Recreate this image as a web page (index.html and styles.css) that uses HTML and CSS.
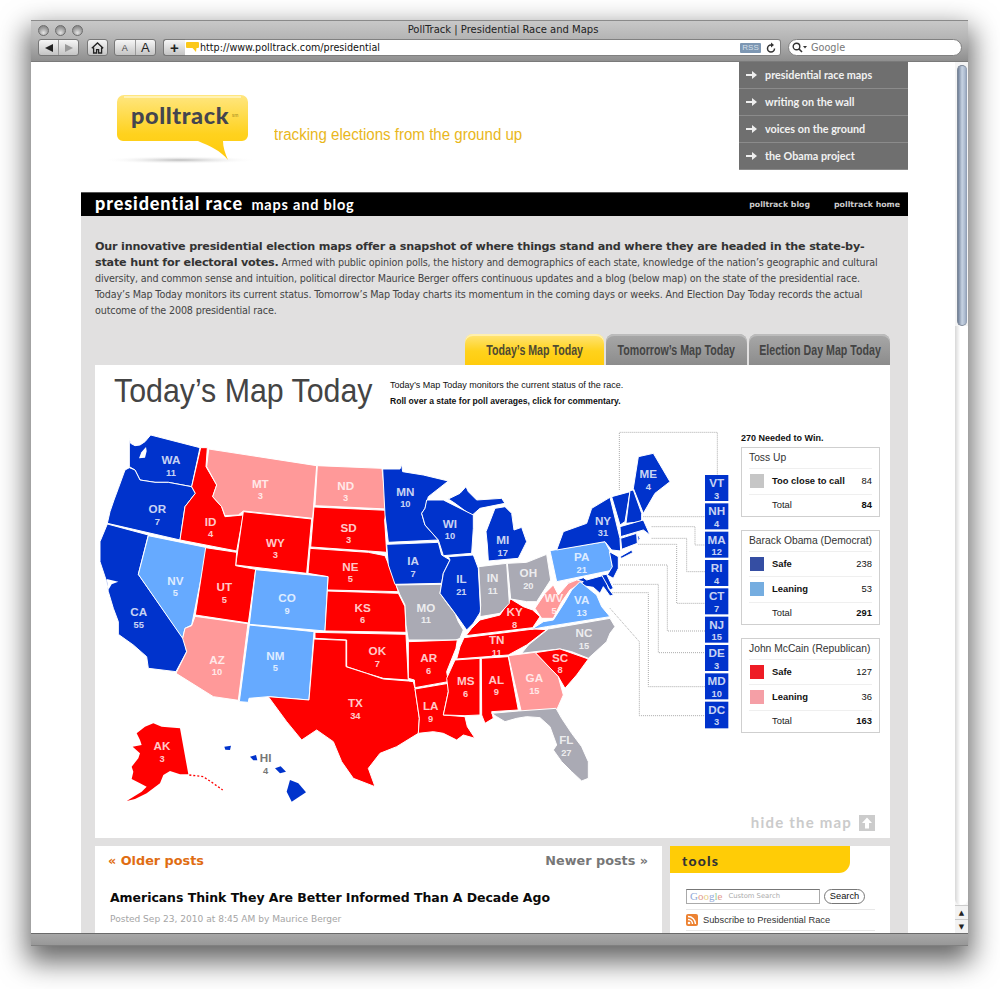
FILE: index.html
```html
<!DOCTYPE html>
<html lang="en">
<head>
<meta charset="utf-8">
<title>PollTrack | Presidential Race and Maps</title>
<link rel="stylesheet" href="styles.css">
</head>
<body>
<div class="window">
  <header class="chrome">
    <div class="titlebar">
      <div class="lights"><i></i><i></i><i></i></div>
      <div class="wintitle">PollTrack | Presidential Race and Maps</div>
      <div></div>
    </div>
    <div class="toolbar">
      <div class="seg seg-nav">
        <span class="btn"><svg width="10" height="10" viewBox="0 0 10 10"><path d="M9 1v8L1 5z" fill="#222"/></svg></span>
        <span class="btn"><svg width="10" height="10" viewBox="0 0 10 10"><path d="M1 1v8l8-4z" fill="#999"/></svg></span>
      </div>
      <div class="seg seg-home">
        <span class="btn"><svg width="13" height="12" viewBox="0 0 13 12"><path d="M.8 6.2 6.5 1l5.7 5.2M2.6 5.4V11h3V7.6h2V11h3V5.4" fill="none" stroke="#222" stroke-width="1.3"/></svg></span>
      </div>
      <div class="seg seg-font">
        <span class="btn a-sm">A</span>
        <span class="btn a-lg">A</span>
      </div>
      <div class="addr">
        <span class="btn plus">+</span>
        <div class="urlfield">
          <svg class="fav" width="13" height="11" viewBox="0 0 13 11"><path d="M1 0h11a1 1 0 0 1 1 1v4a1 1 0 0 1-1 1H10.500L10 10 6.500 6H1a1 1 0 0 1-1-1V1a1 1 0 0 1 1-1z" fill="#fbc81a"/></svg>
          <span class="url">http://www.polltrack.com/presidential</span>
          <span class="rss-badge">RSS</span>
          <svg class="reload" width="10" height="11" viewBox="0 0 10 11"><path d="M8.500 6.500A3.500 3.500 0 1 1 5 3" fill="none" stroke="#333" stroke-width="1.500"/><path d="M5 .5v5L8 3z" fill="#333"/></svg>
        </div>
      </div>
      <div class="searchfield">
        <svg width="16" height="11" viewBox="0 0 16 11"><circle cx="4.500" cy="4.500" r="3.300" fill="none" stroke="#333" stroke-width="1.400"/><path d="m7 7 3 3" stroke="#333" stroke-width="1.600"/><path d="M11 4h4l-2 2.500z" fill="#333"/></svg>
        <span>Google</span>
      </div>
    </div>
  </header>

  <div class="main">
    <div class="viewport">
      <div class="site">
        <div class="head">
          <svg class="logo" width="160" height="80" viewBox="0 0 160 80" role="img" aria-label="polltrack">
            <defs>
              <linearGradient id="lg" x1="0" y1="0" x2="0" y2="1"><stop offset="0" stop-color="#ffe680"/><stop offset=".6" stop-color="#ffd21e"/><stop offset="1" stop-color="#ffc90a"/></linearGradient>
              <radialGradient id="ls"><stop offset="0" stop-color="#bbb"/><stop offset="1" stop-color="#fff" stop-opacity="0"/></radialGradient>
            </defs>
            <ellipse cx="75" cy="69" rx="78" ry="4" fill="url(#ls)"/>
            <path d="M19 4h117a7 7 0 0 1 7 7v33a6 6 0 0 1-6 6h-19c0 6 2 12 5 19-7-9-18-14-30-19H18a6 6 0 0 1-6-6V11a7 7 0 0 1 7-7z" fill="url(#lg)"/>
            <path d="M19 6h117" stroke="#fff6c8" stroke-width="1.500" fill="none"/>
            <text class="logo-word" x="26" y="33">polltrack</text>
            <text class="logo-sm" x="127" y="26">sm</text>
          </svg>
          <div class="tagline"><span>tracking elections from the ground up</span></div>
          <nav class="sitenav">
            <a class="navrow"><svg width="11" height="8" viewBox="0 0 11 8"><path d="M0 3h6V0l5 4-5 4V5H0z" fill="#eee"/></svg>presidential race maps</a>
            <a class="navrow"><svg width="11" height="8" viewBox="0 0 11 8"><path d="M0 3h6V0l5 4-5 4V5H0z" fill="#eee"/></svg>writing on the wall</a>
            <a class="navrow"><svg width="11" height="8" viewBox="0 0 11 8"><path d="M0 3h6V0l5 4-5 4V5H0z" fill="#eee"/></svg>voices on the ground</a>
            <a class="navrow"><svg width="11" height="8" viewBox="0 0 11 8"><path d="M0 3h6V0l5 4-5 4V5H0z" fill="#eee"/></svg>the Obama project</a>
          </nav>
        </div>

        <div class="blackbar">
          <h1><b>presidential race</b> <span>maps and blog</span></h1>
          <div class="barlinks"><a>polltrack blog</a><a>polltrack home</a></div>
        </div>

        <div class="panel">
          <p class="intro"><strong>Our innovative presidential election maps offer a snapshot of where things stand and where they are headed in the state-by-<br>state hunt for electoral votes.</strong> Armed with public opinion polls, the history and demographics of each state, knowledge of the nation’s geographic and cultural<br>diversity, and common sense and intuition, political director Maurice Berger offers continuous updates and a blog (below map) on the state of the presidential race.<br>Today’s Map Today monitors its current status. Tomorrow’s Map Today charts its momentum in the coming days or weeks. And Election Day Today records the actual<br>outcome of the 2008 presidential race.</p>

          <div class="tabs">
            <div class="tab tab-on"><span>Today’s Map Today</span></div>
            <div class="tab tab-off"><span>Tomorrow’s Map Today</span></div>
            <div class="tab tab-off"><span>Election Day Map Today</span></div>
          </div>

          <section class="mapcard">
            <div class="maphead">
              <h2><span>Today’s Map Today</span></h2>
              <div class="mapdesc">
                <p>Today’s Map Today monitors the current status of the race.</p>
                <p><b>Roll over a state for poll averages, click for commentary.</b></p>
              </div>
            </div>
            <div class="mapbody">
              <svg class="usmap" width="640" height="385" viewBox="95 425 640 385" role="img" aria-label="Electoral map of the United States">
                <g class="leaders" transform="translate(380 425) scale(.33333)">
                  <path d="M718 195V22H1012V150"/>
                  <path d="M790 275H975"/>
                  <path d="M815 305H945V360H975"/>
                  <path d="M815 340H920V440H975"/>
                  <path d="M775 358H890V535H975"/>
                  <path d="M720 420H862V618H975"/>
                  <path d="M700 478H835V683H975"/>
                  <path d="M695 503H805V785H975"/>
                  <path d="M690 550 778 650V872H975"/>
                </g>
                <g class="states" transform="translate(90 425) scale(.33333)">
                  <path class="b" d="M118 40 122 55 135 62 150 60 165 50 182 30 330 68 305 185 235 172 195 172 150 165 135 135 118 125Z"/>
                  <path class="water" d="M168 66 154 82 147 100 165 98 170 78Z"/>
                  <path class="b" d="M118 128 135 135 150 165 195 172 235 172 305 185 316 205 285 245 270 345 52 295 60 260 72 225 85 190 105 135Z"/>
                  <path class="b" d="M52 297 175 330 145 448 283 645 290 680 258 740 175 730 170 695 130 660 85 628 85 590 70 550 55 500 50 470 30 410 30 350Z"/>
                  <path class="water" d="M50 462 85 470 65 478 55 495Z"/>
                  <path class="lb" d="M175 332 352 368 305 600 285 610 278 640 145 448Z"/>
                  <path class="r" d="M332 68 352 68 348 125 380 180 368 215 395 245 405 275 460 270 440 378 270 345 285 245 316 205 305 185Z"/>
                  <path class="lr" d="M356 72 680 122 668 280 460 258 445 270 405 272 395 245 368 215 380 180 350 125Z"/>
                  <path class="lr" d="M682 122 876 130 890 252 675 242Z"/>
                  <path class="r" d="M672 246 890 256 884 285 890 382 835 378 662 366Z"/>
                  <path class="r" d="M460 260 665 282 650 445 437 420Z"/>
                  <path class="r" d="M660 370 835 382 885 392 905 440 925 500 712 495 714 455 654 445Z"/>
                  <path class="r" d="M347 368 440 382 437 422 497 433 475 594 316 570Z"/>
                  <path class="lb" d="M497 434 714 455 705 618 478 598Z"/>
                  <path class="lb" d="M478 600 672 620 657 825 535 815 477 820 475 832 448 830Z"/>
                  <path class="lr" d="M315 574 474 596 445 826 370 815 258 745 290 680 278 640 285 610 305 602Z"/>
                  <path class="r" d="M712 498 925 505 945 545 948 622 705 618Z"/>
                  <path class="r" d="M675 622 948 628 955 765 880 760 830 745 770 725 770 645 675 640Z"/>
                  <path class="r" d="M672 642 768 646 768 725 830 745 880 762 955 768 970 770 975 790 988 880 985 925 920 965 870 985 835 1030 855 1085 790 1060 755 1010 730 950 680 915 635 945 590 890 535 815 657 825Z"/>
                  <path class="r nostroke" d="M140 925 165 905 190 895 215 905 270 910 295 1048 270 1048 240 1038 220 1050 210 1075 170 1105 135 1122 110 1128 155 1100 170 1085 150 1075 125 1062 130 1040 125 1025 145 1000 150 985 128 965 155 960 150 945Z"/>
                  <path class="dash" d="M298 1050 340 1055 370 1075 398 1095"/>
                  <path class="b nostroke" d="M403 965 423 962 420 975 406 974Z"/>
                  <path class="b nostroke" d="M480 995 498 990 502 1006 490 1006Z"/>
                  <path class="b nostroke" d="M555 1030 572 1024 588 1040 570 1045Z"/>
                  <path class="b nostroke" d="M600 1065 625 1075 648 1102 605 1130 590 1100Z"/>
                  <text class="s" x="243" y="118">WA</text><text class="n" x="243" y="154">11</text>
                  <text class="s" x="202" y="263">OR</text><text class="n" x="202" y="299">7</text>
                  <text class="s" x="146" y="574">CA</text><text class="n" x="146" y="609">55</text>
                  <text class="s" x="256" y="479">NV</text><text class="n" x="256" y="514">5</text>
                  <text class="s" x="362" y="302">ID</text><text class="n" x="362" y="337">4</text>
                  <text class="s" x="511" y="189">MT</text><text class="n" x="511" y="223">3</text>
                  <text class="s" x="767" y="194">ND</text><text class="n" x="767" y="229">3</text>
                  <text class="s" x="776" y="320">SD</text><text class="n" x="776" y="355">3</text>
                  <text class="s" x="556" y="365">WY</text><text class="n" x="556" y="400">3</text>
                  <text class="s" x="781" y="437">NE</text><text class="n" x="781" y="471">5</text>
                  <text class="s" x="403" y="498">UT</text><text class="n" x="403" y="533">5</text>
                  <text class="s" x="591" y="531">CO</text><text class="n" x="591" y="566">9</text>
                  <text class="s" x="818" y="560">KS</text><text class="n" x="818" y="595">6</text>
                  <text class="s" x="862" y="690">OK</text><text class="n" x="862" y="725">7</text>
                  <text class="s" x="556" y="704">NM</text><text class="n" x="556" y="739">5</text>
                  <text class="s" x="381" y="716">AZ</text><text class="n" x="381" y="751">10</text>
                  <text class="s" x="796" y="846">TX</text><text class="n" x="796" y="881">34</text>
                  <text class="s" x="216" y="976">AK</text><text class="n" x="216" y="1011">3</text>
                  <text class="s hi" x="527" y="1011">HI</text><text class="n hi" x="527" y="1046">4</text>
                </g>
                <g class="states" transform="translate(380 425) scale(.33333)">
                  <path class="b" d="M8 132 60 132 65 118 68 140 130 150 205 168 145 215 135 250 125 265 135 300 175 345 25 352 15 270Z"/>
                  <path class="b" d="M20 358 175 352 185 390 210 405 190 445 185 475 45 478 25 420Z"/>
                  <path class="g" d="M48 480 185 478 180 505 205 540 225 565 235 590 250 615 240 640 228 645 85 645 78 600 75 540 60 510Z"/>
                  <path class="r" d="M85 650 232 645 228 670 200 740 205 770 105 788 103 765 85 760Z"/>
                  <path class="r" d="M105 792 205 775 205 800 190 870 255 875 262 905 285 940 250 930 230 945 190 925 160 920 115 925 118 880Z"/>
                  <path class="r" d="M225 705 300 700 300 870 255 872 190 870 205 800 200 760Z"/>
                  <path class="r" d="M304 700 385 695 415 855 335 860 340 880 315 895 305 870Z"/>
                  <path class="r" d="M252 638 462 612 500 614 440 660 385 690 230 702 240 665Z"/>
                  <path class="r" d="M258 632 275 610 300 585 360 570 392 522 430 545 458 555 480 575 458 608Z"/>
                  <path class="b" d="M205 395 280 390 295 430 302 560 280 595 260 615 225 565 180 505 190 445 210 405Z"/>
                  <path class="g" d="M296 425 380 415 388 535 360 565 300 575 302 540Z"/>
                  <path class="g" d="M382 415 440 412 500 388 512 465 470 530 440 530 392 522Z"/>
                  <path class="b" d="M325 408 322 360 318 320 345 250 375 245 395 265 402 315 425 307 440 350 415 400Z"/>
                  <path class="b" d="M205 222 240 205 258 185 265 200 290 225 365 220 375 235 300 250 275 272 225 235Z"/>
                  <path class="b" d="M140 225 190 225 280 270 280 310 275 385 190 392 175 345 135 300 125 265 135 250Z"/>
                  <path class="b" d="M560 475 610 458 620 465 675 450 685 490 700 510 690 513 670 485 660 505 640 487Z"/>
                  <path class="b" d="M665 450 680 448 700 490 690 495Z"/>
                  <path class="lb" d="M510 377 675 350 690 378 695 415 700 435 530 470Z"/>
                  <path class="lr" d="M465 550 495 505 520 480 535 510 565 475 590 465 610 470 570 495 545 530 520 580 485 580Z"/>
                  <path class="lb" d="M455 613 490 590 520 585 555 530 575 495 600 470 625 490 650 510 665 545 690 575 500 605Z"/>
                  <path class="g" d="M425 685 445 660 505 612 690 580 705 605 690 625 680 650 625 700 575 680 540 672 465 680Z"/>
                  <path class="r" d="M465 683 540 672 625 702 590 750 555 790 535 755Z"/>
                  <path class="lr" d="M385 692 465 682 535 755 550 810 530 855 425 865Z"/>
                  <path class="g" d="M335 865 415 858 528 850 545 880 575 925 605 965 625 1010 625 1060 605 1068 575 1040 545 1010 520 975 530 960 510 905 480 878 440 875 410 880 375 890 350 875Z"/>
                  <path class="b" d="M530 375 550 320 620 295 635 250 690 217 720 340 722 378 695 375 675 350Z"/>
                  <path class="b" d="M720 395 755 375 758 383 725 400Z"/>
                  <path class="b" d="M688 380 715 395 715 430 700 460 682 450 697 425Z"/>
                  <path class="b" d="M695 215 750 200 735 290 720 300Z"/>
                  <path class="b" d="M750 197 760 195 785 265 785 290 738 295Z"/>
                  <path class="b" d="M760 190 775 95 820 85 870 170 825 205 790 265Z"/>
                  <path class="b" d="M720 305 790 285 810 330 790 315 722 335Z"/>
                  <path class="b" d="M722 340 770 325 772 355 725 373Z"/>
                  <path class="b" d="M772 325 780 340 775 350Z"/>
                  <text class="s" x="76" y="212">MN</text><text class="n" x="76" y="247">10</text>
                  <text class="s" x="210" y="308">WI</text><text class="n" x="210" y="343">10</text>
                  <text class="s" x="368" y="358">MI</text><text class="n" x="368" y="393">17</text>
                  <text class="s" x="99" y="420">IA</text><text class="n" x="99" y="455">7</text>
                  <text class="s" x="244" y="474">IL</text><text class="n" x="244" y="509">21</text>
                  <text class="s" x="338" y="472">IN</text><text class="n" x="338" y="507">11</text>
                  <text class="s" x="445" y="457">OH</text><text class="n" x="445" y="492">20</text>
                  <text class="s" x="138" y="560">MO</text><text class="n" x="138" y="595">11</text>
                  <text class="s" x="404" y="574">KY</text><text class="n" x="404" y="609">8</text>
                  <text class="s" x="522" y="530">WV</text><text class="n" x="522" y="567">5</text>
                  <text class="s" x="605" y="538">VA</text><text class="n" x="605" y="573">13</text>
                  <text class="s" x="605" y="408">PA</text><text class="n" x="605" y="443">21</text>
                  <text class="s" x="669" y="299">NY</text><text class="n" x="669" y="334">31</text>
                  <text class="s" x="805" y="160">ME</text><text class="n" x="805" y="195">4</text>
                  <text class="s" x="350" y="657">TN</text><text class="n" x="350" y="692">11</text>
                  <text class="s" x="146" y="711">AR</text><text class="n" x="146" y="746">6</text>
                  <text class="s" x="612" y="636">NC</text><text class="n" x="612" y="671">15</text>
                  <text class="s" x="540" y="710">SC</text><text class="n" x="540" y="745">8</text>
                  <text class="s" x="257" y="780">MS</text><text class="n" x="257" y="815">6</text>
                  <text class="s" x="349" y="776">AL</text><text class="n" x="349" y="811">9</text>
                  <text class="s" x="463" y="771">GA</text><text class="n" x="463" y="806">15</text>
                  <text class="s" x="152" y="855">LA</text><text class="n" x="152" y="890">9</text>
                  <text class="s" x="559" y="957">FL</text><text class="n" x="559" y="992">27</text>
                  <rect class="bx" x="975" y="150" width="70" height="78"/><text class="s" x="1010" y="186">VT</text><text class="n" x="1010" y="221">3</text>
                  <rect class="bx" x="975" y="235" width="70" height="78"/><text class="s" x="1010" y="271">NH</text><text class="n" x="1010" y="306">4</text>
                  <rect class="bx" x="975" y="320" width="70" height="78"/><text class="s" x="1010" y="356">MA</text><text class="n" x="1010" y="391">12</text>
                  <rect class="bx" x="975" y="405" width="70" height="78"/><text class="s" x="1010" y="441">RI</text><text class="n" x="1010" y="476">4</text>
                  <rect class="bx" x="975" y="490" width="70" height="78"/><text class="s" x="1010" y="526">CT</text><text class="n" x="1010" y="561">7</text>
                  <rect class="bx" x="975" y="575" width="70" height="78"/><text class="s" x="1010" y="611">NJ</text><text class="n" x="1010" y="646">15</text>
                  <rect class="bx" x="975" y="660" width="70" height="78"/><text class="s" x="1010" y="696">DE</text><text class="n" x="1010" y="731">3</text>
                  <rect class="bx" x="975" y="745" width="70" height="78"/><text class="s" x="1010" y="781">MD</text><text class="n" x="1010" y="816">10</text>
                  <rect class="bx" x="975" y="830" width="70" height="80"/><text class="s" x="1010" y="866">DC</text><text class="n" x="1010" y="901">3</text>
                </g>
              </svg>

              <aside class="legend">
                <div class="need">270 Needed to Win.</div>
                <div class="lbox">
                  <div class="ltitle">Toss Up</div>
                  <div class="lrow"><i class="sw sw-g"></i><b>Too close to call</b><span>84</span></div>
                  <div class="lrow total"><i></i><span class="lt">Total</span><b>84</b></div>
                </div>
                <div class="lbox">
                  <div class="ltitle">Barack Obama (Democrat)</div>
                  <div class="lrow"><i class="sw sw-b"></i><b>Safe</b><span>238</span></div>
                  <div class="lrow"><i class="sw sw-lb"></i><b>Leaning</b><span>53</span></div>
                  <div class="lrow total"><i></i><span class="lt">Total</span><b>291</b></div>
                </div>
                <div class="lbox">
                  <div class="ltitle">John McCain (Republican)</div>
                  <div class="lrow"><i class="sw sw-r"></i><b>Safe</b><span>127</span></div>
                  <div class="lrow"><i class="sw sw-lr"></i><b>Leaning</b><span>36</span></div>
                  <div class="lrow total"><i></i><span class="lt">Total</span><b>163</b></div>
                </div>
              </aside>
            </div>
            <div class="hidemap">
              <span>hide the map</span>
              <svg width="16" height="16" viewBox="0 0 16 16"><rect width="16" height="16" fill="#ccc"/><path d="M8 2.500 13 8h-3v5.500H6V8H3z" fill="#fff"/></svg>
            </div>
          </section>

          <div class="lower">
            <div class="posts">
              <div class="pager"><a class="older">« Older posts</a><a class="newer">Newer posts »</a></div>
              <h3>Americans Think They Are Better Informed Than A Decade Ago</h3>
              <p class="meta">Posted Sep 23, 2010 at 8:45 AM by Maurice Berger</p>
            </div>
            <aside class="tools">
              <div class="toolshead">tools</div>
              <div class="toolsbody">
                <div class="searchrow">
                  <div class="cse"><span class="gg"><i class="g1">G</i><i class="g2">o</i><i class="g3">o</i><i class="g1">g</i><i class="g4">l</i><i class="g2">e</i></span><span class="cs">Custom Search</span></div>
                  <div class="csebtn">Search</div>
                </div>
                <div class="subrow">
                  <svg width="12" height="12" viewBox="0 0 12 12"><rect width="12" height="12" rx="2" fill="#ec8232"/><circle cx="3" cy="9" r="1.300" fill="#fff"/><path d="M2 5.500A4.500 4.500 0 0 1 6.500 10M2 2.500A7.500 7.500 0 0 1 9.500 10" fill="none" stroke="#fff" stroke-width="1.400"/></svg>
                  <span>Subscribe to Presidential Race</span>
                </div>
              </div>
            </aside>
          </div>
        </div>
      </div>
    </div>
    <div class="scrollbar">
      <div class="thumb"></div>
      <div class="track"></div>
      <div class="arrow">▲</div>
      <div class="arrow">▼</div>
    </div>
  </div>
  <footer class="statusbar"></footer>
</div>
</body>
</html>
```
FILE: styles.css
```css
* { box-sizing: border-box; }
html, body { margin: 0; height: 989px; overflow: hidden; background: #fff; }
p, h1, h2, h3 { margin: 0; }

.window {
  width: 937px; height: 926px; margin: 20px 0 0 31px;
  display: flex; flex-direction: column;
  box-shadow: 0 12px 26px 4px rgba(0,0,0,.6);
  font-family: "DejaVu Sans", sans-serif;
  background: #fff;
}

/* browser chrome */
.chrome {
  height: 42px; flex: none;
  background: linear-gradient(#c8c8c8, #b4b4b4 45%, #8f8f8f);
  border-top: 1px solid #8a8a8a;
  border-bottom: 1px solid #7a7a7a;
}
.titlebar {
  height: 18px; padding: 0 0 0 7px;
  display: grid; grid-template-columns: 1fr auto 1fr; align-items: center;
}
.lights { display: flex; gap: 6px; }
.lights i {
  width: 11px; height: 11px; border-radius: 50%;
  border: 1px solid #6d6d6d;
  background: radial-gradient(circle at 50% 75%, #e4e4e4, #a0a0a0 55%, #777);
}
.wintitle { font: 10px/16px "DejaVu Sans", sans-serif; color: #222; }
.toolbar { display: flex; height: 17px; padding-left: 7px; }
.seg, .addr { display: flex; height: 17px; }
.seg { border: 1px solid #777; border-radius: 3px; overflow: hidden; background: linear-gradient(#f6f6f6, #c4c4c4); }
.btn { display: flex; align-items: center; justify-content: center; color: #222; }
.btn + .btn { border-left: 1px solid #9a9a9a; }
.seg-nav { width: 41px; }
.seg-nav .btn { flex: 1; }
.seg-home { width: 21px; margin-left: 8px; }
.seg-home .btn { flex: 1; }
.seg-font { width: 42px; margin-left: 6px; }
.seg-font .btn { flex: 1; font-family: "Liberation Sans", sans-serif; }
.a-sm { font-size: 9px; color: #444; }
.a-lg { font-size: 13px; }
.addr { margin-left: 7px; width: 618px; }
.plus {
  width: 22px; font: bold 15px/15px "Liberation Sans", sans-serif;
  border: 1px solid #777; border-right: 0; border-radius: 3px 0 0 3px;
  background: linear-gradient(#f6f6f6, #c4c4c4);
}
.urlfield {
  flex: 1; display: flex; align-items: center; background: #fff;
  border: 1px solid #808080; border-left: 0; border-radius: 0 3px 3px 0; padding: 0 4px 0 1px;
}
.fav { flex: none; }
.url { margin-left: 1px; font: 9.600px/15px "DejaVu Sans", sans-serif; color: #111; }
.rss-badge {
  margin-left: auto; width: 21px; height: 10px; background: #7d97b3; border-radius: 1px;
  color: #d6e0ea; font: 8px/10px "Liberation Sans", sans-serif; text-align: center;
}
.reload { margin-left: 5px; }
.searchfield {
  margin-left: 7px; width: 174px; height: 17px; background: #fff;
  border: 1px solid #808080; border-radius: 9px;
  display: flex; align-items: center; padding-left: 3px; gap: 3px;
  font: 9.700px/15px "DejaVu Sans", sans-serif; color: #777;
}

/* main */
.main { flex: 1; min-height: 0; display: flex; }
.viewport { flex: 1; min-width: 0; overflow: hidden; background: #fff; }
.scrollbar { width: 13px; flex: none; display: flex; flex-direction: column; background: #f4f4f4; padding-top: 3px; }
.thumb {
  height: 261px; margin-left: 2px; width: 10px; border-radius: 5px;
  border: 1px solid #7c8797; border-right: 0;
  background: linear-gradient(90deg, #6f7f98, #c7d3e2 45%, #aebcd0 75%, #8c9ab0);
}
.track { flex: 1; background: linear-gradient(90deg, #d8d8d8, #fff 40%); border-radius: 0 0 6px 6px; }
.arrow { height: 14px; font: 7px/14px "DejaVu Sans", sans-serif; text-align: center; color: #222; background: #f2f2f2; border-top: 1px solid #ccc; }
.statusbar { height: 13px; flex: none; background: linear-gradient(#a7a7a7, #989898); border-top: 1px solid #6a6a6a; border-bottom: 1px solid #808080; }

/* site */
.site { width: 827px; margin-left: 50px; }
.head { height: 130px; display: flex; align-items: flex-start; }
.logo { margin: 29px 0 0 24px; flex: none; }
.logo-word { font: 900 23.500px "Lato", sans-serif; fill: #44454f; letter-spacing: .6px; }
.logo-sm { font: 5px "Lato", sans-serif; fill: #a98d1f; }
.tagline {
  margin: 63px 0 0 9px; width: 250px; white-space: nowrap;
  font: 16px/20px "Liberation Sans", sans-serif; color: #e9b71c;
}
.tagline span { display: inline-block; transform: scaleX(.943); transform-origin: left center; }
.sitenav { margin-left: auto; width: 169px; flex: none; }
.navrow {
  display: flex; align-items: center; height: 27px; padding-left: 7px; gap: 8px;
  background: #6f6f6f; border-bottom: 1px solid #8b8b8b;
  font: 700 10.800px/26px "Lato", sans-serif; color: #f2f2f2; letter-spacing: 0;
}
.blackbar { height: 24px; background: #000; border-top: 1px solid #555; display: flex; justify-content: space-between; align-items: center; padding: 0 8px 0 14px; }
.blackbar h1 { font: 700 14.500px/20px "Lato", sans-serif; color: #fff; letter-spacing: .8px; white-space: nowrap; margin-top: -2px; }
.blackbar h1 b { font-size: 18px; font-weight: 900; letter-spacing: .9px; margin-right: 4px; }
.barlinks { display: flex; gap: 24px; font: 700 7.800px/20px "DejaVu Sans", sans-serif; color: #ccc; }

.panel { background: #e1e0e0; padding: 23px 18px 20px 14px; }
.intro { font: 9.600px/16px "DejaVu Sans", sans-serif; color: #444; letter-spacing: -.15px; white-space: nowrap; }
.intro strong { font-size: 11.200px; color: #333; letter-spacing: -.2px; }

.tabs { display: flex; justify-content: flex-end; gap: 2px; margin-top: 15px; height: 31px; }
.tab { width: 141px; border-radius: 8px 8px 0 0; display: flex; align-items: center; justify-content: center; padding-top: 1px; font: 700 14px/20px "Liberation Sans", sans-serif; white-space: nowrap; }
.tab span { display: inline-block; transform: scaleX(.76); }
.tab-on { width: 139px; background: linear-gradient(#ffe57a, #ffd21c 55%, #ffcb0c); color: #4f4a33; box-shadow: inset 0 2px 0 #fff0ae; }
.tab-off { background: linear-gradient(#a8a8a8, #8c8c8c); color: #444; box-shadow: inset 0 2px 0 #bcbcbc; }

.mapcard { background: #fff; height: 473px; }
.maphead { height: 60px; display: flex; }
.maphead h2 { width: 295px; padding: 7px 0 0 19px; font: 400 33.500px/38px "Liberation Sans", sans-serif; color: #444; white-space: nowrap; }
.maphead h2 span { display: inline-block; transform: scaleX(.905); transform-origin: left center; }
.mapdesc { font: 9px/16px "Liberation Sans", sans-serif; color: #111; padding-top: 12px; white-space: nowrap; }
.mapdesc b { font-size: 8.600px; }
.mapbody { display: flex; height: 385px; }
.usmap { display: block; flex: none; }
.states path { stroke: #fff; stroke-width: 3; stroke-linejoin: round; }
.states .nostroke { stroke: none; }
.b { fill: #0033cc; }
.r { fill: #ff0000; }
.lr { fill: #ff9999; }
.lb { fill: #66aaff; }
.g { fill: #aaaab4; }
.states .water { fill: #fff; stroke: none; }
.states .dash { fill: none; stroke: #ff0000; stroke-width: 4; stroke-dasharray: 6 6; }
.bx { fill: #0033cc; }
.leaders path { fill: none; stroke: #aaa; stroke-width: 3; stroke-dasharray: 3 3; }
.s, .n { font-family: "Liberation Sans", sans-serif; font-weight: 700; text-anchor: middle; fill: #fff; fill-opacity: .8; }
.s { font-size: 35px; }
.n { font-size: 28px; }
.states .hi { fill: #777; fill-opacity: 1; font-weight: 700; }

.legend { width: 139px; margin-left: 6px; flex: none; font: 9.400px/14px "Liberation Sans", sans-serif; color: #111; }
.need { font: 700 9px/12px "Liberation Sans", sans-serif; padding-top: 7px; height: 22px; }
.lbox { border: 1px solid #cfcfcf; margin-bottom: 13px; padding: 0 7px; }
.ltitle { height: 21px; line-height: 20px; font-size: 10.300px; white-space: nowrap; border-bottom: 1px solid #efefef; color: #333; }
.lrow { display: flex; align-items: center; height: 25.500px; border-bottom: 1px solid #efefef; }
.lrow.total { height: 21px; border-bottom: 0; }
.lrow i { width: 14px; height: 14px; margin: 0 8px 0 1px; flex: none; }
.lrow span:last-child, .lrow b:last-child { margin-left: auto; }
.lt { color: #222; }
.sw-g { background: #c6c6c6; }
.sw-b { background: #354ea3; }
.sw-lb { background: #75ade0; }
.sw-r { background: #ee1c25; }
.sw-lr { background: #f59fa6; }

.hidemap { display: flex; justify-content: flex-end; align-items: center; gap: 7px; padding: 5px 15px 0 0; font: 700 15px/16px "Lato", sans-serif; color: #cbcbcb; letter-spacing: 1.200px; }
.hidemap span { margin-top: -2px; }

.lower { display: flex; gap: 8px; margin-top: 8px; }
.posts { width: 567px; height: 200px; background: #fff; padding: 7px 14px 0 13px; }
.pager { display: flex; justify-content: space-between; font: 700 12.800px/16px "DejaVu Sans", sans-serif; }
.older { color: #e06d12; }
.newer { color: #777; }
.posts h3 { margin: 20px 0 0 2px; font: 700 12.500px/18px "DejaVu Sans", sans-serif; letter-spacing: -.05px; color: #0a0a0a; white-space: nowrap; }
.meta { margin: 5px 0 0 2px; font: 9.050px/14px "DejaVu Sans", sans-serif; color: #a5a5a5; white-space: nowrap; }
.tools { width: 220px; height: 200px; background: #fff; }
.toolshead { width: 180px; height: 27px; background: #ffcc06; border-radius: 0 0 11px 0; padding-left: 12px; font: 900 14px/29px "Lato", sans-serif; color: #333; letter-spacing: 1.200px; }
.toolsbody { padding: 16px 15px 0 16px; }
.searchrow { display: flex; gap: 4px; height: 21px; border-bottom: 1px solid #e8e8e8; }
.cse { width: 134px; height: 15px; border: 1px solid #aaa; border-top-color: #777; display: flex; align-items: center; padding-left: 3px; gap: 6px; white-space: nowrap; }
.gg { font: 11px/13px "Liberation Serif", serif; }
.gg i { font-style: normal; }
.g1 { color: #8fa8d8; }
.g2 { color: #e39a8f; }
.g3 { color: #e6cf88; }
.g4 { color: #9ccb9c; }
.cs { font: 6.800px/13px "DejaVu Sans", sans-serif; color: #aaa; }
.csebtn { width: 41px; height: 15px; border: 1px solid #777; border-radius: 8px; font: 9.300px/13px "Liberation Sans", sans-serif; text-align: center; color: #111; }
.subrow { display: flex; align-items: center; gap: 5px; height: 21px; border-bottom: 1px solid #e8e8e8; font: 9.300px/14px "Liberation Sans", sans-serif; color: #333; }
```
